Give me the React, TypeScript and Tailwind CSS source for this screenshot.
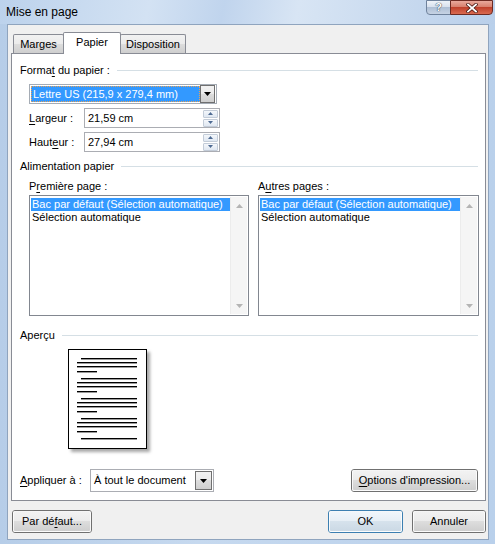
import React from 'react';

const ff = "font-['Liberation_Sans',Arial,sans-serif]";

const U: React.FC<{ children: React.ReactNode }> = ({ children }) => (
  <span className="underline underline-offset-[2px] decoration-1">{children}</span>
);

const Caret: React.FC = () => (
  <svg width="7" height="4" viewBox="0 0 7 4">
    <path d="M0 0h7L3.5 4z" fill="#000" />
  </svg>
);

const GroupHeader: React.FC<{ children: React.ReactNode; className?: string }> = ({ children, className = '' }) => (
  <div className={`flex h-[14px] items-center pl-[8px] pr-[7px] ${className}`}>
    <span className="leading-[14px] whitespace-nowrap">{children}</span>
    <div className="ml-[7px] h-px flex-1 bg-[#d5dfe5]" />
  </div>
);

const SpinBtn: React.FC<{ up?: boolean }> = ({ up }) => (
  <div className="flex h-[8px] w-[15px] items-center justify-center rounded-[1px] border border-[#c3ccd8] bg-[linear-gradient(#f4f7fb,#dfe7f1)]">
    <svg width="5" height="3" viewBox="0 0 5 3">
      <path d={up ? 'M0 3h5L2.5 0z' : 'M0 0h5L2.5 3z'} fill="#4d6a92" />
    </svg>
  </div>
);

const NumberField: React.FC<{ value: string }> = ({ value }) => (
  <div className="flex h-[20px] w-[136px] items-center border border-[#abadb3] bg-white pl-[3px] pr-px">
    <span className="flex-1 leading-none">{value}</span>
    <div className="flex flex-col gap-px">
      <SpinBtn up />
      <SpinBtn />
    </div>
  </div>
);

const ScrollArrow: React.FC<{ up?: boolean }> = ({ up }) => (
  <div className="flex h-[17px] items-center justify-center">
    <svg width="7" height="4" viewBox="0 0 7 4">
      <path d={up ? 'M0 4h7L3.5 0z' : 'M0 0h7L3.5 4z'} fill="#b4b4b4" />
    </svg>
  </div>
);

const ListBox: React.FC<{ width: string }> = ({ width }) => (
  <div className={`flex h-[121px] ${width} border border-[#828790] bg-white p-px`}>
    <div className="flex-1 pt-px">
      <div className="h-[13px] bg-[#3399ff] pl-[1px] leading-[13px] text-white whitespace-nowrap">
        Bac par défaut (Sélection automatique)
      </div>
      <div className="h-[13px] pl-[1px] leading-[13px] whitespace-nowrap">Sélection automatique</div>
    </div>
    <div className="flex w-[17px] flex-col border-l border-[#ececec] bg-[#f5f5f5]">
      <ScrollArrow up />
      <div className="flex-1" />
      <ScrollArrow />
    </div>
  </div>
);

const Button: React.FC<{ children: React.ReactNode; width: string; isDefault?: boolean }> = ({
  children,
  width,
  isDefault,
}) => (
  <div
    className={`h-[23px] ${width} rounded-[3px] border ${isDefault ? 'border-[#3c7fb1]' : 'border-[#707070]'}`}
  >
    <div
      className={`flex h-full w-full items-center justify-center rounded-[2px] border border-white/80 ${
        isDefault
          ? 'bg-[linear-gradient(#f0f6fb_0%,#e6eef5_50%,#d6e2ec_50%,#cbd9e5_100%)]'
          : 'bg-[linear-gradient(#f2f2f2_0%,#ebebeb_50%,#dddddd_50%,#cfcfcf_100%)]'
      }`}
    >
      <span className="leading-none whitespace-nowrap">{children}</span>
    </div>
  </div>
);

const DropButton: React.FC<{ className?: string }> = ({ className = '' }) => (
  <div
    className={`flex items-center justify-center border border-[#707070] bg-[linear-gradient(#f2f2f2_0%,#ebebeb_50%,#dddddd_50%,#cfcfcf_100%)] ${className}`}
  >
    <Caret />
  </div>
);

// page preview: four paragraphs of text lines plus one trailing line
const PagePreview: React.FC = () => {
  const groups = [8, 28, 48, 68];
  const line = (x: number, y: number, w: number) => (
    <g key={`${x}-${y}`}>
      <rect x={x} y={y} width={w} height="1" fill="#000" />
      <rect x={x} y={y + 1} width={w} height="1" fill="#9a9a9a" />
    </g>
  );
  return (
    <div className="h-[100px] w-[79px] border border-black bg-white shadow-[3px_3px_3px_rgba(0,0,0,0.35)]">
      <svg width="77" height="98" viewBox="0 0 77 98" shapeRendering="crispEdges">
        {groups.map((y) => (
          <g key={y}>
            {line(12, y, 56)}
            {line(8, y + 4, 60)}
            {line(8, y + 8, 60)}
            {line(8, y + 13, 20)}
          </g>
        ))}
        {line(12, 88, 56)}
      </svg>
    </div>
  );
};

const App: React.FC = () => {
  return (
    <div
      className={`${ff} flex h-[544px] w-[495px] flex-col overflow-hidden bg-[linear-gradient(90deg,#b6cde8,#c6d9ef_40%,#b9d0eb)] text-[11px] text-black`}
    >
      {/* Title bar */}
      <div className="flex h-[24px] items-start bg-[linear-gradient(100deg,#bcd2ec_0%,#d3e2f3_30%,#c0d4ed_45%,#d8e5f4_60%,#b9cfea_100%)]">
        <span className="pl-[6px] pt-[4px] text-[12px] leading-[16px]">Mise en page</span>
        <div className="flex-1" />
        <div className="mr-[2px] flex">
          <div className="flex h-[15px] w-[25px] items-center justify-center rounded-bl-[4px] border border-[#6f829c] bg-[linear-gradient(#eef3f9_0%,#d8e1ee_45%,#aebfd5_50%,#c6d3e4_100%)]">
            <span className="text-[11px] font-bold leading-none text-white [text-shadow:0_0_1px_#2a3a50,0_0_1px_#2a3a50]">?</span>
          </div>
          <div className="-ml-px flex h-[15px] w-[43px] items-center justify-center rounded-br-[4px] border border-[#6d2a22] bg-[linear-gradient(#e9a99c_0%,#d8806e_45%,#c0412c_50%,#d96a50_100%)]">
            <svg width="12" height="10" viewBox="0 0 12 10">
              <path d="M2 1.5l8 7M10 1.5l-8 7" stroke="#4a1a14" strokeWidth="3.4" strokeLinecap="square" />
              <path d="M2 1.5l8 7M10 1.5l-8 7" stroke="#fff" strokeWidth="1.8" strokeLinecap="square" />
            </svg>
          </div>
        </div>
      </div>

      {/* Client area */}
      <div className="ml-[7px] flex h-[516px] w-[482px] flex-col border border-[#8fa4be] bg-[#f0f0f0] pt-[7px]">
        {/* Tabs */}
        <div className="ml-[5px] flex h-[21px] items-end">
          <div className="flex h-[19px] w-[51px] items-center justify-center rounded-t-[2px] border border-b-0 border-[#898c95] bg-[linear-gradient(#f2f2f2_0%,#ebebeb_50%,#dddddd_50%,#cfcfcf_100%)] pt-px">
            Marges
          </div>
          <div className="relative z-10 -mb-px -ml-px flex h-[22px] w-[58px] items-center justify-center rounded-t-[2px] border border-b-0 border-[#898c95] bg-white pb-[2px]">
            Papier
          </div>
          <div className="-ml-px flex h-[19px] w-[66px] items-center justify-center rounded-t-[2px] border border-b-0 border-[#898c95] bg-[linear-gradient(#f2f2f2_0%,#ebebeb_50%,#dddddd_50%,#cfcfcf_100%)] pt-px">
            Disposition
          </div>
        </div>

        {/* Tab panel */}
        <div className="ml-[3px] flex h-[448px] w-[475px] flex-col border border-[#898c95] bg-white pt-[9px]">
          <GroupHeader>
            Forma<U>t</U> du papier :
          </GroupHeader>

          <div className="ml-[17px] mt-[7px] flex h-[20px] w-[188px] items-center border border-[#a5acb5] bg-white p-px">
            <div className="flex h-full flex-1 items-center border border-dotted border-[#e9a256] bg-[#3399ff] pl-px text-white">
              <span className="leading-none">Lettre US (215,9 x 279,4 mm)</span>
            </div>
            <DropButton className="h-[18px] w-[15px]" />
          </div>

          <div className="ml-[17px] mt-[4px] flex h-[20px] items-center">
            <span className="w-[55px]">
              <U>L</U>argeur :
            </span>
            <NumberField value="21,59 cm" />
          </div>
          <div className="ml-[17px] mt-[4px] flex h-[20px] items-center">
            <span className="w-[55px]">
              Haut<U>e</U>ur :
            </span>
            <NumberField value="27,94 cm" />
          </div>

          <GroupHeader className="mt-[7px]">Alimentation papier</GroupHeader>

          <div className="ml-[17px] mt-[6px] flex h-[14px] items-center gap-[9px]">
            <span className="w-[220px]">
              P<U>r</U>emière page :
            </span>
            <span>
              A<U>u</U>tres pages :
            </span>
          </div>
          <div className="ml-[17px] mt-[2px] flex gap-[9px]">
            <ListBox width="w-[220px]" />
            <ListBox width="w-[221px]" />
          </div>

          <GroupHeader className="mt-[12px]">Aperçu</GroupHeader>

          <div className="ml-[56px] mt-[7px]">
            <PagePreview />
          </div>

          <div className="mb-[8px] mt-auto flex h-[23px] items-center pl-[8px] pr-[7px]">
            <span className="w-[70px]">
              <U>A</U>ppliquer à :
            </span>
            <div className="flex h-[23px] w-[124px] items-center border border-[#abadb3] bg-white pl-[3px] pr-px">
              <span className="flex-1 leading-none">À tout le document</span>
              <DropButton className="h-[19px] w-[17px]" />
            </div>
            <div className="flex-1" />
            <Button width="w-[127px]">
              <U>O</U>ptions d'impression...
            </Button>
          </div>
        </div>

        {/* Bottom buttons */}
        <div className="mt-[9px] flex pl-[4px] pr-[2px]">
          <Button width="w-[80px]">
            Par dé<U>f</U>aut...
          </Button>
          <div className="flex-1" />
          <Button width="w-[75px]" isDefault>
            OK
          </Button>
          <div className="w-[9px]" />
          <Button width="w-[74px]">Annuler</Button>
        </div>
      </div>
    </div>
  );
};

export default App;
